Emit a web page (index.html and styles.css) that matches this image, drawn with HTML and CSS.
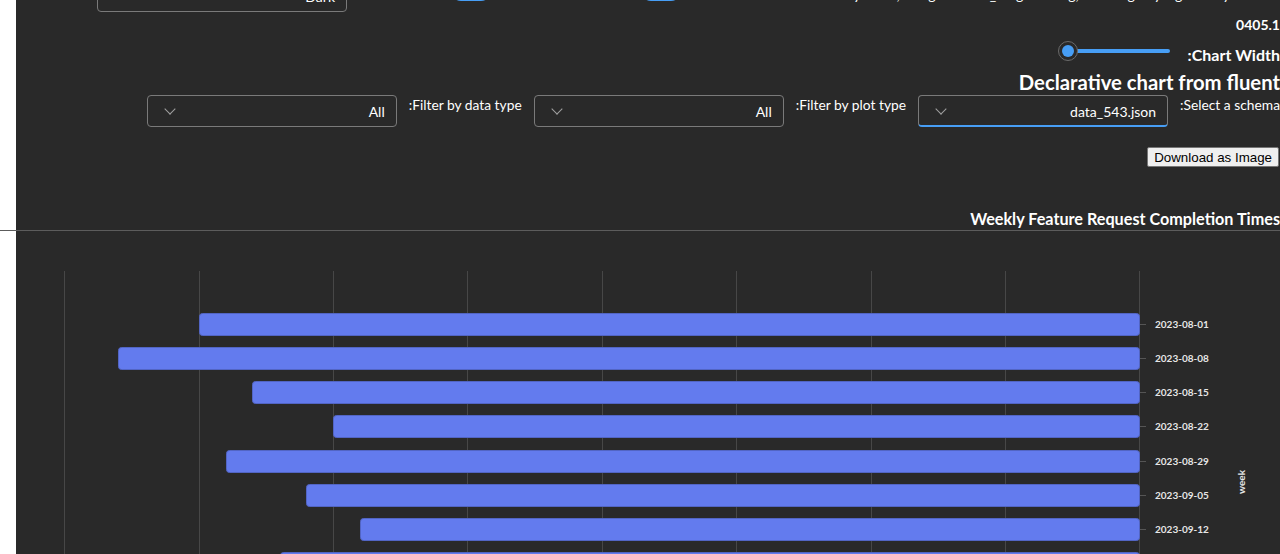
FILE: index.html
```html
<!DOCTYPE html>
<html lang="en" dir="rtl">
<head>
<meta charset="utf-8">
<title>Declarative chart</title>
<link rel="stylesheet" href="styles.css">
</head>
<body>
<div class="app">
  <div class="row0">
    <span class="hint">Show stacked bars by week, using the data_range setting, then align by legend key.</span>
    <span class="toggle"></span>
    <span class="toggle t2"></span>
    <div class="dropdown top-dd"><span class="dd-text">Dark</span><span class="chev"></span></div>
  </div>

  <div class="version"><bdi>0405.1</bdi></div>

  <div class="slider-row">
    <span class="lbl-bold">Chart Width:</span>
    <div class="slider">
      <div class="track"></div>
      <div class="thumb"></div>
    </div>
  </div>

  <h1 class="title">Declarative chart from fluent</h1>

  <div class="filters">
    <span class="flabel">Select a schema:</span>
    <div class="dropdown focused"><span class="dd-text">data_543.json</span><span class="chev"></span></div>
    <span class="flabel">Filter by plot type:</span>
    <div class="dropdown"><span class="dd-text">All</span><span class="chev"></span></div>
    <span class="flabel">Filter by data type:</span>
    <div class="dropdown"><span class="dd-text">All</span><span class="chev"></span></div>
  </div>

  <div class="btn-row"><button class="dl-btn" dir="ltr">Download as Image</button></div>

  <div class="chart-title">Weekly Feature Request Completion Times</div>
  <div class="divider"></div>

  <svg class="chart" width="1264" height="323" viewBox="0 0 1264 323" xmlns="http://www.w3.org/2000/svg">
    <g stroke="#474747" stroke-width="1">
      <line x1="48.5" y1="40" x2="48.5" y2="323"/>
      <line x1="183.5" y1="40" x2="183.5" y2="323"/>
      <line x1="317.5" y1="40" x2="317.5" y2="323"/>
      <line x1="451.5" y1="40" x2="451.5" y2="323"/>
      <line x1="586.5" y1="40" x2="586.5" y2="323"/>
      <line x1="720.5" y1="40" x2="720.5" y2="323"/>
      <line x1="855.5" y1="40" x2="855.5" y2="323"/>
      <line x1="989.5" y1="40" x2="989.5" y2="323"/>
      <line x1="1123.5" y1="40" x2="1123.5" y2="323"/>
    </g>
    <g fill="#637bee" stroke="#5265c4" stroke-width="1">
      <rect x="183.5" y="82.5" width="940" height="22" rx="3"/>
      <rect x="102.5" y="116.5" width="1021" height="22" rx="3"/>
      <rect x="236.5" y="150.5" width="887" height="22" rx="3"/>
      <rect x="317.5" y="184.5" width="806" height="22" rx="3"/>
      <rect x="210.5" y="219.5" width="913" height="22" rx="3"/>
      <rect x="290.5" y="253.5" width="833" height="22" rx="3"/>
      <rect x="344.5" y="287.5" width="779" height="22" rx="3"/>
      <rect x="264.5" y="321.5" width="859" height="22" rx="3"/>
    </g>
    <g stroke="#555" stroke-width="1">
      <line x1="1124" y1="93.5" x2="1130" y2="93.5"/>
      <line x1="1124" y1="127.5" x2="1130" y2="127.5"/>
      <line x1="1124" y1="161.5" x2="1130" y2="161.5"/>
      <line x1="1124" y1="195.5" x2="1130" y2="195.5"/>
      <line x1="1124" y1="230.5" x2="1130" y2="230.5"/>
      <line x1="1124" y1="264.5" x2="1130" y2="264.5"/>
      <line x1="1124" y1="298.5" x2="1130" y2="298.5"/>
    </g>
    <g class="ytick" fill="#e6e6e6">
      <text x="1139" y="97">2023-08-01</text>
      <text x="1139" y="131">2023-08-08</text>
      <text x="1139" y="165">2023-08-15</text>
      <text x="1139" y="199">2023-08-22</text>
      <text x="1139" y="234">2023-08-29</text>
      <text x="1139" y="268">2023-09-05</text>
      <text x="1139" y="302">2023-09-12</text>
    </g>
    <text class="ytitle" fill="#e6e6e6" transform="translate(1229 251) rotate(-90)" text-anchor="middle">week</text>
  </svg>
</div>
</body>
</html>
```

FILE: styles.css
```css
* { box-sizing: border-box; }
html, body { margin: 0; padding: 0; }
body {
  background: #ffffff;
  width: 1280px;
  height: 554px;
  overflow: hidden;
}
.app {
  display: flow-root;
  margin-left: 16px;
  height: 554px;
  background: #292929;
  color: #ffffff;
  font-family: "Lato", "Noto Sans", sans-serif;
  font-size: 14px;
}

/* top, mostly scrolled-off row */
.row0 {
  display: flex;
  align-items: flex-start;
  height: 32px;
  margin-top: -20px;
  overflow: hidden;
}
.hint {
  margin-right: 50px;
  margin-top: 5px;
  width: 530px;
  line-height: 20px;
  white-space: nowrap;
  overflow: hidden;
}
.toggle {
  width: 40px;
  height: 20px;
  border-radius: 10px;
  background: #479ef5;
  margin-right: 19px;
  margin-top: 1px;
  flex-shrink: 0;
}
.toggle.t2 { margin-right: 150px; }
.top-dd { margin-right: 104px; }

.version {
  margin-top: 3px;
  height: 20px;
  line-height: 20px;
  font-weight: 700;
  font-size: 14px;
}

.slider-row {
  display: flex;
  align-items: flex-start;
  margin-top: 4px;
  height: 24px;
}
.lbl-bold {
  font-weight: 700;
  font-size: 16px;
  line-height: 20px;
  margin-top: 6px;
}
.slider {
  position: relative;
  width: 120px;
  height: 24px;
  margin-right: 10px;
  display: flex;
  align-items: center;
  padding: 0 8px 0 10px;
}
.track {
  flex: 1;
  height: 4px;
  border-radius: 2px;
  background: #479ef5;
}
.thumb {
  position: absolute;
  left: 0;
  top: 2px;
  width: 20px;
  height: 20px;
  border-radius: 50%;
  background: #292929;
  border: 1px solid #6b6b6b;
  display: flex;
  align-items: center;
  justify-content: center;
}
.thumb::before {
  content: "";
  width: 12px;
  height: 12px;
  border-radius: 50%;
  background: #479ef5;
}

.title {
  margin: 6px 0 0 0;
  font-size: 20.3px;
  line-height: 26px;
  font-weight: 700;
  white-space: nowrap;
}

.filters {
  display: flex;
  align-items: flex-start;
  gap: 12px;
  height: 32px;
}
.flabel {
  line-height: 20px;
  font-size: 13.8px;
  white-space: nowrap;
}
.dropdown {
  width: 250px;
  height: 32px;
  border: 1px solid #7a7a7a;
  border-radius: 4px;
  display: flex;
  align-items: center;
  justify-content: space-between;
  padding: 0 11px 0 16px;
  flex-shrink: 0;
}
.dropdown.focused {
  border-bottom: 2px solid #479ef5;
  padding-top: 1px;
}
.dd-text { font-size: 14px; }
.chev {
  width: 8px;
  height: 8px;
  border-right: 1px solid #a0a0a0;
  border-bottom: 1px solid #a0a0a0;
  transform: rotate(45deg);
  margin-top: -5px;
  margin-left: 2px;
}

.btn-row {
  display: flex;
  margin-top: 20px;
  height: 20px;
}
.dl-btn {
  margin-right: 1px;
  height: 20px;
  padding: 0 6px;
  font-family: "Liberation Sans", Arial, sans-serif;
  font-size: 13.33px;
  color: #000;
  background: #efefef;
  border: 1px solid #767676;
  border-radius: 2px;
}

.chart-title {
  margin-top: 42px;
  height: 20px;
  line-height: 20px;
  font-weight: 700;
  font-size: 16.2px;
  white-space: nowrap;
}
.divider {
  margin-top: 1px;
  margin-left: -16px;
  height: 1px;
  background: #5c5c5c;
}
.chart {
  display: block;
  direction: ltr;
}
.ytick text {
  font-family: "Lato", "Noto Sans", sans-serif;
  font-size: 10px;
  font-weight: 700;
}
.ytitle {
  font-family: "Lato", "Noto Sans", sans-serif;
  font-size: 10px;
  font-weight: 700;
}
```
